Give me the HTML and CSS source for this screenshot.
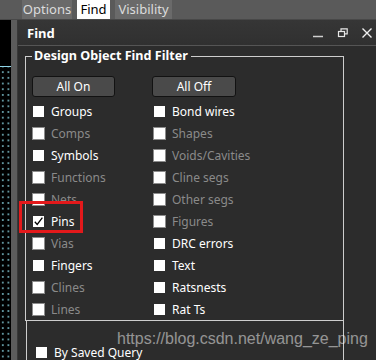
FILE: index.html
```html
<!DOCTYPE html>
<html lang="en">
<head>
  <meta charset="UTF-8" />
  <title>Find</title>
  <link rel="stylesheet" href="styles.css">
</head>
<body>

  <div class="tabs">
    <span class="tab tab-options">Options</span>
    <span class="tab tab-find active">Find</span>
    <span class="tab tab-vis">Visibility</span>
  </div>

  <div class="main">
    <div class="canvas">
      <div class="canvas-grid"></div>
    </div>
    <div class="sash"></div>

    <div class="panel">
      <div class="titlebar">
        <span class="title">Find</span>
        <div class="win-btns">
          <svg width="12" height="12" viewBox="0 0 12 12"><line x1="0" y1="9.5" x2="10" y2="9.5" stroke="#cfcfcf" stroke-width="1.5"/></svg>
          <svg width="12" height="12" viewBox="0 0 12 12" fill="none" stroke="#e6e6e6" stroke-width="1.2"><rect x="1.5" y="4.5" width="6" height="5"/><path d="M4 4.5V1.8h6.2v5H7.5"/></svg>
          <svg width="12" height="12" viewBox="0 0 12 12"><path d="M1.5 1.5l9 9M10.5 1.5l-9 9" stroke="#f0f0f0" stroke-width="1.4"/></svg>
        </div>
      </div>

      <div class="panel-body">
        <fieldset class="filter">
          <legend>Design Object Find Filter</legend>
          <div class="btn-row">
            <button class="btn">All On</button>
            <button class="btn">All Off</button>
          </div>
          <div class="checks">
            <div class="check"><span class="box"></span>Groups</div>
            <div class="check"><span class="box"></span>Bond wires</div>
            <div class="check off"><span class="box"></span>Comps</div>
            <div class="check off"><span class="box"></span>Shapes</div>
            <div class="check"><span class="box"></span>Symbols</div>
            <div class="check off"><span class="box"></span>Voids/Cavities</div>
            <div class="check off"><span class="box"></span>Functions</div>
            <div class="check off"><span class="box"></span>Cline segs</div>
            <div class="check off"><span class="box"></span>Nets</div>
            <div class="check off"><span class="box"></span>Other segs</div>
            <div class="check marked">
              <span class="box"><svg width="11" height="11" viewBox="0 0 11 11"><path d="M1.8 5.8l2.4 2.6L9.4 1.6" fill="none" stroke="#000" stroke-width="1.3"/></svg></span>Pins
              <span class="highlight"></span>
            </div>
            <div class="check off"><span class="box"></span>Figures</div>
            <div class="check off"><span class="box"></span>Vias</div>
            <div class="check"><span class="box"></span>DRC errors</div>
            <div class="check"><span class="box"></span>Fingers</div>
            <div class="check"><span class="box"></span>Text</div>
            <div class="check off"><span class="box"></span>Clines</div>
            <div class="check"><span class="box"></span>Ratsnests</div>
            <div class="check off"><span class="box"></span>Lines</div>
            <div class="check"><span class="box"></span>Rat Ts</div>
          </div>
        </fieldset>

        <div class="query-box">
          <div class="check"><span class="box"></span>By Saved Query</div>
        </div>
      </div>
    </div>
  </div>

  <div class="watermark">https://blog.csdn.net/wang_ze_ping</div>

</body>
</html>
```

FILE: styles.css
```css
body {
  margin: 0;
  width: 376px;
  height: 360px;
  overflow: hidden;
  background: #2c2c2c;
  font-family: "Noto Sans", "Open Sans", sans-serif;
  font-size: 12px;
  color: #fff;
  position: relative;
}
.tabs {
  height: 19px;
  background: #5a5a5a;
  border-bottom: 1px solid #484848;
  display: flex;
  gap: 5px;
  padding-left: 22px;
}
.tab {
  height: 19px;
  line-height: 18px;
  font-size: 13px;
  color: #dcdcdc;
  background: #6a6a6a;
  text-align: center;
}
.tab-options { width: 50px; }
.tab-find { width: 33px; }
.tab-vis { width: 57px; }
.tab.active {
  background: #fff;
  color: #000;
}
.main {
  display: flex;
  height: 340px;
  overflow: hidden;
}
.canvas {
  width: 11px;
  background: #000;
  padding-top: 46px;
}
.canvas-grid {
  height: 100%;
  border-top: 1px solid #8fd3e6;
  background-image: radial-gradient(circle, #5f939c 0.7px, transparent 1px);
  background-size: 5.6px 5.7px;
  background-position: 0 8px;
}
.sash {
  width: 6px;
  background: #5c5c5c;
  border-right: 1px solid #393939;
}
.panel {
  flex: 1;
  display: flex;
  flex-direction: column;
  background: #2c2c2c;
}
.titlebar {
  flex: none;
  height: 25px;
  background: linear-gradient(#363636, #303030);
  border-bottom: 1px solid #555;
  display: flex;
  align-items: center;
  justify-content: space-between;
  padding: 0 3px 0 9px;
}
.title {
  font-size: 13px;
  font-weight: bold;
}
.win-btns {
  display: flex;
  gap: 12px;
  align-items: center;
}
.win-btns svg { display: block; }
.panel-body {
  flex: none;
  padding: 2px 32px 0 7px;
}
.filter {
  margin: 0;
  padding: 12px 0 0 6px;
  border: 1px solid #cdcdcd;
  min-width: 0;
}
.filter legend {
  font-size: 12.6px;
  font-weight: bold;
  line-height: 16px;
  padding: 0 3px 0 2px;
}
.btn-row {
  display: flex;
  gap: 37px;
  margin-bottom: 3px;
}
.btn {
  height: 21px;
  width: 83px;
  padding: 0;
  background: #4a4a4a;
  border: 1px solid #121212;
  border-radius: 3px;
  color: #fff;
  font-family: inherit;
  font-size: 12px;
}
.btn + .btn { width: 84px; }
.checks {
  display: grid;
  grid-template-columns: 121px 1fr;
  grid-auto-rows: 22px;
}
.check {
  display: flex;
  align-items: center;
  gap: 6px;
  position: relative;
  white-space: nowrap;
}
.box {
  width: 11px;
  height: 11px;
  background: #fff;
  border: 1px solid #2c2c2c;
  flex: none;
  display: flex;
  align-items: center;
  justify-content: center;
}
.check.off { color: #8a8a8a; }
.check.off .box { border-color: #8c8c8c; }
.highlight {
  position: absolute;
  left: -13px;
  top: -9px;
  width: 58px;
  height: 26px;
  border: 3px solid #e3191b;
}
.query-box {
  margin-left: 1px;
  border-left: 1px solid #cdcdcd;
  border-right: 1px solid #cdcdcd;
  height: 40px;
  padding: 20px 0 0 8px;
}
.query-box .check { height: 22px; }
.watermark {
  position: absolute;
  left: 117px;
  top: 330px;
  font-family: "Liberation Sans", Arial, sans-serif;
  font-size: 16px;
  color: rgba(255, 255, 255, 0.5);
  pointer-events: none;
}
```
